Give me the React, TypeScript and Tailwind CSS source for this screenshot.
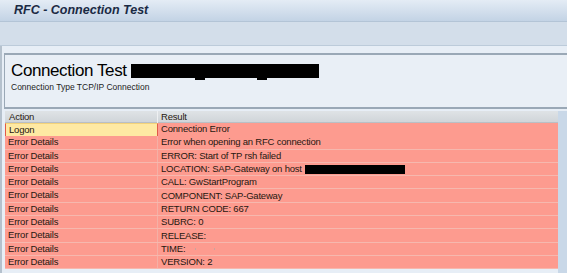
const rows: { action: string; result: string; host?: boolean; time?: boolean }[] = [
  { action: 'Error Details', result: 'Error when opening an RFC connection' },
  { action: 'Error Details', result: 'ERROR: Start of TP rsh failed' },
  { action: 'Error Details', result: 'LOCATION: SAP-Gateway on host', host: true },
  { action: 'Error Details', result: 'CALL: GwStartProgram' },
  { action: 'Error Details', result: 'COMPONENT: SAP-Gateway' },
  { action: 'Error Details', result: 'RETURN CODE: 667' },
  { action: 'Error Details', result: 'SUBRC: 0' },
  { action: 'Error Details', result: 'RELEASE:' },
  { action: 'Error Details', result: 'TIME:', time: true },
  { action: 'Error Details', result: 'VERSION: 2' },
];

function Redacted({ className }: { className: string }) {
  return (
    <span className={`relative inline-block bg-black ${className}`}>
      <span className="absolute bottom-[-2px] left-[34%] w-[10px] h-[3px] bg-black" />
      <span className="absolute bottom-[-2px] left-[67%] w-[10px] h-[3px] bg-black" />
    </span>
  );
}

export default function App() {
  return (
    <div
      className="w-[567px] h-[273px] flex flex-col overflow-hidden bg-[#e7eef6] text-[#261810]"
      style={{ fontFamily: '"Liberation Sans", Arial, sans-serif' }}
    >
      {/* title bar */}
      <div className="h-[22px] shrink-0 flex items-center px-[14px] bg-gradient-to-b from-[#e4ecf5] to-[#c3d3e5] border-b border-[#b3c4d6]">
        <span className="text-[12.5px] font-bold italic text-[#1a2a44]">RFC - Connection Test</span>
      </div>

      {/* toolbar */}
      <div className="h-[24px] shrink-0 bg-[#d3deea] border-b border-[#bccbda]" />

      {/* content */}
      <div className="flex-1 flex flex-col border-l-2 border-[#b5c1cd] pt-[7px]">
        {/* header box */}
        <div className="ml-[2px] h-[56px] shrink-0 border-t-2 border-l border-b-2 border-[#9aa8b6] bg-[#e9eff6] pl-[6px] pt-[7px]">
          <div className="flex items-center gap-[4px] h-[17px]">
            <span className="text-[17px] leading-none tracking-[-0.4px] text-black">Connection Test</span>
            <Redacted className="w-[188px] h-[14px] mt-[1px]" />
          </div>
          <div className="text-[8.5px] leading-none mt-[4px] text-[#1c1c1c]">Connection Type TCP/IP Connection</div>
        </div>

        {/* table area */}
        <div className="flex-1 flex mt-[2px]">
          <div className="ml-[3px] w-[553px] flex flex-col text-[9.5px] tracking-[-0.2px]">
            <div className="h-[12px] shrink-0 grid grid-cols-[153px_1fr] bg-gradient-to-b from-[#dfe3e6] to-[#d0d5d9] border-b border-[#b9bfc5]">
              <div className="px-[4px] leading-[12px] border-r border-[#eef0f2]">Action</div>
              <div className="px-[3px] leading-[12px]">Result</div>
            </div>
            <div className="grid grid-cols-[153px_1fr] h-[13.3px] shrink-0 border-b border-[#f6b8ae]">
              <div className="px-[3px] leading-[12px] bg-[#fee9a3] border-l border-r border-[#e05a48] border-t border-t-[#f3d37a]">Logon</div>
              <div className="px-[3px] leading-[12px] bg-[#fd9b8f]">Connection Error</div>
            </div>
            {rows.map((r, i) => (
              <div key={i} className="grid grid-cols-[153px_1fr] h-[13.3px] shrink-0 bg-[#fd9b8f] border-b border-[#f6b8ae]">
                <div className="px-[3px] leading-[12px] border-r border-[#f4b0a6]">{r.action}</div>
                <div className="px-[3px] leading-[12px] flex items-center">
                  <span>{r.result}</span>
                  {r.host && <span className="ml-[3px] inline-block w-[100px] h-[9px] bg-black" />}
                  {r.time && (
                    <span className="ml-[10px] flex gap-[18px]">
                      <span className="w-[1px] h-[2px] bg-[#c9a49e]" />
                      <span className="w-[1px] h-[2px] bg-[#c9a49e]" />
                    </span>
                  )}
                </div>
              </div>
            ))}
          </div>
          <div className="flex-1 bg-[#c9d8e8]" />
        </div>
      </div>
    </div>
  );
}
